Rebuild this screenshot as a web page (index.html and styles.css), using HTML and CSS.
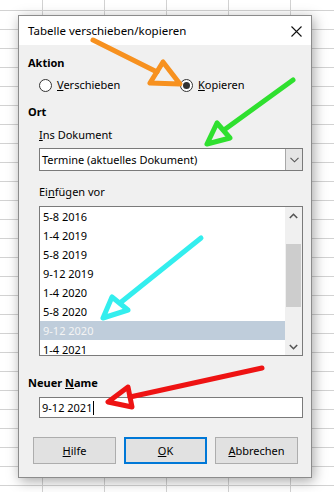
FILE: index.html
```html
<!DOCTYPE html>
<html lang="de">

<head>
    <meta charset="UTF-8">
    <meta name="viewport" content="width=device-width, initial-scale=1.0">
    <link rel="stylesheet" href="styles.css">
    <title>Tabelle verschieben/kopieren</title>
</head>

<body>
    <div class="sheet">
        <div class="dialog">
            <div class="titlebar">
                <span class="title">Tabelle verschieben/kopieren</span>
                <svg class="close" width="11" height="11" viewBox="0 0 11 11">
                    <path d="M0.5 0.5L10.5 10.5M10.5 0.5L0.5 10.5" stroke="#111" stroke-width="1.1" fill="none" />
                </svg>
            </div>
            <div class="content">
                <div class="heading heading-first">Aktion</div>
                <div class="radios">
                    <label class="radio"><span class="radio-dot"></span><span><u>V</u>erschieben</span></label>
                    <label class="radio radio-checked"><span class="radio-dot"></span><span><u>K</u>opieren</span></label>
                </div>

                <div class="heading heading-ort">Ort</div>
                <div class="indent">
                    <div class="label label-doc"><u>I</u>ns Dokument</div>
                    <div class="combo">
                        <span class="combo-text">Termine (aktuelles Dokument)</span>
                        <span class="combo-btn">
                            <svg width="9" height="6" viewBox="0 0 9 6"><path d="M0.5 0.8L4.5 4.8L8.5 0.8" stroke="#555" stroke-width="1.1" fill="none" /></svg>
                        </span>
                    </div>
                    <div class="label label-before">Ei<u>n</u>fügen vor</div>
                    <div class="listbox">
                        <ul class="list">
                            <li>5-8 2016</li>
                            <li>1-4 2019</li>
                            <li>5-8 2019</li>
                            <li>9-12 2019</li>
                            <li>1-4 2020</li>
                            <li>5-8 2020</li>
                            <li class="selected">9-12 2020</li>
                            <li>1-4 2021</li>
                        </ul>
                        <div class="scrollbar">
                            <div class="sb-arrow">
                                <svg width="9" height="6" viewBox="0 0 9 6"><path d="M0.8 5L4.5 1.3L8.2 5" stroke="#555" stroke-width="1.6" fill="none" /></svg>
                            </div>
                            <div class="sb-track"><div class="sb-thumb"></div></div>
                            <div class="sb-arrow">
                                <svg width="9" height="6" viewBox="0 0 9 6"><path d="M0.8 1L4.5 4.7L8.2 1" stroke="#555" stroke-width="1.6" fill="none" /></svg>
                            </div>
                        </div>
                    </div>
                </div>

                <div class="heading heading-name">Neuer <u>N</u>ame</div>
                <div class="indent">
                    <div class="textbox">9-12 2021<span class="caret"></span></div>
                </div>

                <div class="buttons">
                    <button class="btn"><u>H</u>ilfe</button>
                    <button class="btn btn-default"><u>O</u>K</button>
                    <button class="btn"><u>A</u>bbrechen</button>
                </div>
            </div>
        </div>

        <!-- hand drawn arrows on top of the screenshot -->
        <svg class="marks" width="334" height="492" viewBox="0 0 334 492">
            <g fill="none" stroke-width="5" stroke-linecap="round" stroke-linejoin="round">
                <g stroke="#f7911f">
                    <path d="M93 40L157 72" />
                    <path d="M163 62L150 83L180 84Z" />
                </g>
                <g stroke="#2fe02f">
                    <path d="M293 80L224 130" />
                    <path d="M217 123L207 144L230 138Z" />
                </g>
                <g stroke="#33eeee">
                    <path d="M201 238L120 303" />
                    <path d="M112 297L103 318L128 310Z" />
                </g>
                <g stroke="#ee1313">
                    <path d="M262 368L130 397" />
                    <path d="M128 387L108 402L132 407Z" />
                </g>
            </g>
        </svg>
    </div>
</body>

</html>
```

FILE: styles.css
```css
* {
    margin: 0;
    padding: 0;
    box-sizing: border-box;
}

ul,
li {
    list-style: none;
}

body {
    font-family: "Noto Sans", "Open Sans", sans-serif;
    font-size: 11px;
    line-height: 16px;
    color: #000;
}

.sheet {
    position: relative;
    width: 334px;
    height: 492px;
    overflow: hidden;
    padding: 15px 0 0 18px;
    background-color: #fff;
    background-image: linear-gradient(to right, #d2d2d2 1px, transparent 1px), linear-gradient(to bottom, #d2d2d2 1px, transparent 1px);
    background-size: 62px 100%, 100% 19px;
    background-position: 42px 0, 0 10px;
}

.dialog {
    width: 294px;
    height: 463px;
    border: 1px solid #8c8c8c;
    background-color: #f0f0f0;
    box-shadow: 2px 3px 12px rgba(0, 0, 0, 0.35);
}

.titlebar {
    height: 29px;
    background-color: #fff;
    display: flex;
    align-items: center;
    justify-content: space-between;
    padding: 0 9px 0 9px;
    font-size: 11.5px;
}

.title {
    padding-top: 1px;
}

.close {
    display: block;
    margin-top: 1px;
}

.content {
    padding: 10px 8px 0 9px;
}

.heading {
    font-weight: bold;
}

.radios {
    display: flex;
    margin: 4px 0 0 11px;
    height: 20px;
    align-items: center;
}

.radio {
    display: flex;
    align-items: center;
    gap: 5px;
}

.radio:first-child {
    width: 141px;
}

.radio-dot {
    width: 13px;
    height: 13px;
    border: 1px solid #333;
    border-radius: 50%;
    background-color: #fff;
    position: relative;
}

.radio-checked .radio-dot::after {
    content: "";
    position: absolute;
    left: 2px;
    top: 2px;
    width: 7px;
    height: 7px;
    border-radius: 50%;
    background-color: #333;
}

.heading-ort {
    margin-top: 9px;
}

.indent {
    margin-left: 11px;
}

.label-doc {
    margin-top: 7px;
}

.combo {
    margin-top: 5px;
    height: 23px;
    border: 1px solid #7a7a7a;
    background-color: #fff;
    display: flex;
}

.combo-text {
    flex: 1;
    padding-left: 2px;
    line-height: 21px;
}

.combo-btn {
    width: 17px;
    background-color: #e5e5e5;
    border-left: 1px solid #a8a8a8;
    display: flex;
    align-items: center;
    justify-content: center;
}

.combo-btn svg,
.sb-arrow svg {
    display: block;
}

.label-before {
    margin-top: 13px;
}

.listbox {
    margin-top: 6px;
    height: 150px;
    border: 1px solid #7a7a7a;
    background-color: #fff;
    display: flex;
}

.list {
    flex: 1;
    overflow: hidden;
}

.list li {
    height: 19px;
    line-height: 19px;
    padding-left: 3px;
}

.list .selected {
    background-color: #bfcddb;
    color: #f4f4f4;
}

.scrollbar {
    width: 17px;
    background-color: #f0f0f0;
    display: flex;
    flex-direction: column;
}

.sb-arrow {
    height: 17px;
    display: flex;
    align-items: center;
    justify-content: center;
}

.sb-track {
    flex: 1;
}

.sb-thumb {
    margin: 20px 0 0 1px;
    width: 15px;
    height: 63px;
    background-color: #cdcdcd;
}

.heading-name {
    margin-top: 19px;
}

.textbox {
    margin-top: 6px;
    height: 21px;
    border: 1px solid #7a7a7a;
    background-color: #fff;
    padding-left: 2px;
    line-height: 19px;
    display: flex;
    align-items: center;
}

.caret {
    width: 1px;
    height: 14px;
    background-color: #000;
    margin-left: 1px;
}

.buttons {
    display: flex;
    gap: 8px;
    margin: 19px 0 0 5px;
}

.btn {
    width: 83px;
    height: 27px;
    font: inherit;
    color: #000;
    background-color: #e1e1e1;
    border: 1px solid #adadad;
}

.btn-default {
    border: 2px solid #0078d7;
}

.marks {
    position: absolute;
    top: 0;
    left: 0;
    pointer-events: none;
}
```
